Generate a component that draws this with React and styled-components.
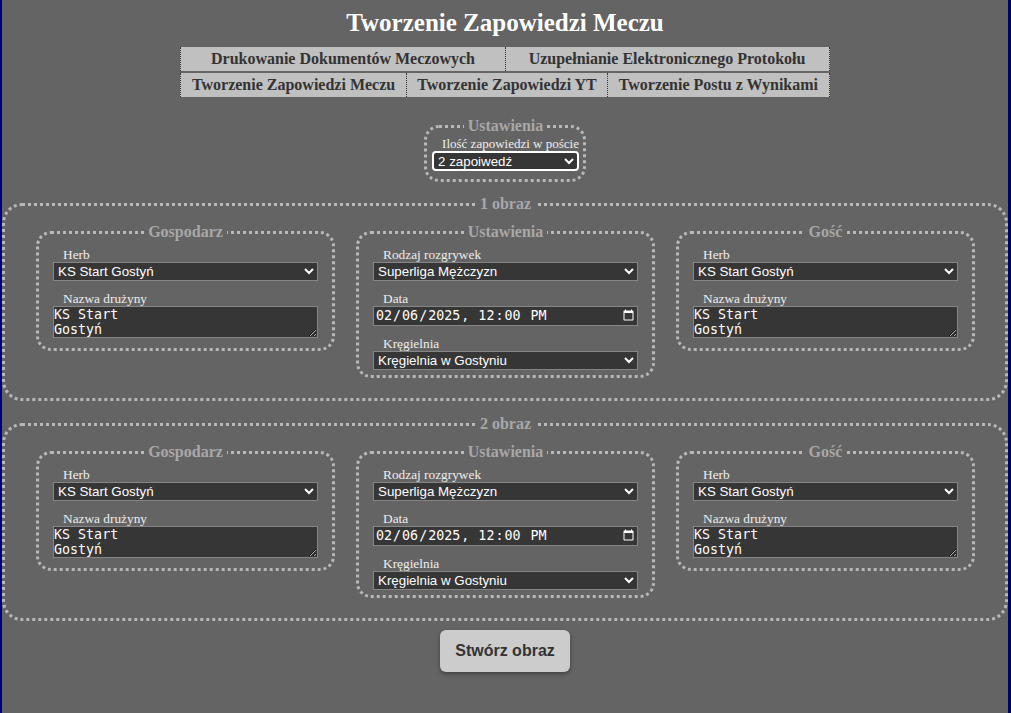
import React from "react";
import styled, { createGlobalStyle } from "styled-components";

const Global = createGlobalStyle`
  html, body { margin: 0; padding: 0; background: #00006e; }
  body { font-family: "Liberation Serif", "Times New Roman", serif; }
  #root { min-height: 100vh; }
`;

const Page = styled.div`
  margin: 0 3px 0 2px;
  min-height: 100vh;
  background: #646464;
  display: flex;
  flex-direction: column;
  align-items: center;
  color: #eee;
`;

const Title = styled.h1`
  margin: 8px 0 10px;
  font-size: 25px;
  line-height: 29px;
  font-weight: bold;
  color: #fff;
`;

const Tabs = styled.div`
  display: inline-flex;
  flex-direction: column;
  gap: 2px;
`;

const TabRow = styled.div`
  display: flex;
`;

const Tab = styled.button`
  flex: ${(p) => (p.$stretch ? 1 : "none")};
  background: #c0c0c0;
  color: #333;
  border: none;
  border-left: 1px dotted #333;
  &:last-child { border-right: 1px dotted #333; }
  padding: 3px 10.5px;
  margin: 0;
  font-family: "Liberation Serif", serif;
  font-weight: bold;
  font-size: 16px;
  line-height: 18px;
  cursor: pointer;
  white-space: nowrap;
`;

const Fieldset = styled.fieldset`
  box-sizing: border-box;
  border: 3px dotted #b8b8b8;
  border-radius: ${(p) => p.$radius || 15}px;
  margin: 0;
  min-width: 0;
`;

const Legend = styled.legend`
  margin: 0 auto;
  padding: 0 4px;
  font-family: "Liberation Serif", serif;
  font-weight: bold;
  font-size: 16px;
  line-height: 18px;
  color: #a8a8a8;
`;

const SettingsBox = styled(Fieldset)`
  margin-top: 20px;
  padding: 1px 4px 8px 5px;
  width: fit-content;
`;

const ImageBox = styled(Fieldset)`
  align-self: stretch;
  margin-top: ${(p) => p.$top}px;
  padding: 10px 30px 20px 31px;
  display: grid;
  grid-template-columns: repeat(3, 1fr);
  column-gap: 21px;
  align-items: start;
`;

const Panel = styled(Fieldset)`
  padding: 6px 14px 5px;
  display: flex;
  flex-direction: column;
`;

const Field = styled.div`
  display: flex;
  flex-direction: column;
  & + & { margin-top: ${(p) => p.$gap ?? 9}px; }
`;

const Label = styled.label`
  display: block;
  margin-left: 10px;
  font-family: "Liberation Serif", serif;
  font-size: ${(p) => p.$size || 13.33}px;
  line-height: 15px;
  color: #eee;
  white-space: nowrap;
`;

const Select = styled.select`
  color-scheme: dark;
  box-sizing: border-box;
  width: 100%;
  height: ${(p) => (p.$focus ? 20 : 19)}px;
  margin: 0;
  padding: 0;
  background-color: #363636;
  color: #fff;
  border: ${(p) => (p.$focus ? "2px solid #fff" : "1px solid #858585")};
  border-radius: ${(p) => (p.$focus ? 4 : 0)}px;
  font-family: "Liberation Sans", Arial, sans-serif;
  font-size: 13.33px;
`;

const TextArea = styled.textarea`
  color-scheme: dark;
  box-sizing: border-box;
  display: block;
  width: 100%;
  height: 32px;
  margin: 0 0 5px;
  padding: 0;
  background: #363636;
  color: #fff;
  border: 1px solid #858585;
  font-family: "DejaVu Sans Mono", monospace;
  font-size: 13.33px;
  line-height: 15px;
`;

const DateInput = styled.input`
  color-scheme: dark;
  box-sizing: border-box;
  width: 100%;
  height: 20px;
  margin: 0;
  padding: 0 0 0 1px;
  background: #363636;
  color: #fff;
  border: 1px solid #858585;
  font-family: "DejaVu Sans Mono", monospace;
  font-size: 13.33px;
`;

const CreateButton = styled.button`
  margin: 9px 0 30px;
  padding: 12px 15px;
  background: #cccccc;
  color: #333;
  border: none;
  border-radius: 6px;
  box-shadow: 0 2px 4px rgba(0, 0, 0, 0.35);
  font-family: "Liberation Sans", Arial, sans-serif;
  font-weight: bold;
  font-size: 16px;
  line-height: 18px;
  cursor: pointer;
`;

const teams = ["KS Start Gostyń", "KS Alfa Siedlce", "Zatoka Puck"];

function TeamPanel({ title, id }) {
  return (
    <Panel>
      <Legend>{title}</Legend>
      <Field>
        <Label htmlFor={id + "-herb"}>Herb</Label>
        <Select id={id + "-herb"} defaultValue={teams[0]}>
          {teams.map((t) => (
            <option key={t}>{t}</option>
          ))}
        </Select>
      </Field>
      <Field>
        <Label htmlFor={id + "-name"}>Nazwa drużyny</Label>
        <TextArea id={id + "-name"} defaultValue={"KS Start\nGostyń"} />
      </Field>
    </Panel>
  );
}

function SettingsPanel({ id }) {
  return (
    <Panel>
      <Legend>Ustawienia</Legend>
      <Field>
        <Label htmlFor={id + "-liga"}>Rodzaj rozgrywek</Label>
        <Select id={id + "-liga"} defaultValue="Superliga Mężczyzn">
          <option>Superliga Mężczyzn</option>
          <option>Superliga Kobiet</option>
          <option>I liga Mężczyzn</option>
        </Select>
      </Field>
      <Field>
        <Label htmlFor={id + "-data"}>Data</Label>
        <DateInput id={id + "-data"} type="datetime-local" defaultValue="2025-02-06T12:00" />
      </Field>
      <Field $gap={10}>
        <Label htmlFor={id + "-kreg"}>Kręgielnia</Label>
        <Select id={id + "-kreg"} defaultValue="Kręgielnia w Gostyniu">
          <option>Kręgielnia w Gostyniu</option>
          <option>Kręgielnia w Siedlcach</option>
        </Select>
      </Field>
    </Panel>
  );
}

function ImageSection({ n, top }) {
  return (
    <ImageBox $radius={20} $top={top}>
      <Legend>{n} obraz</Legend>
      <TeamPanel title="Gospodarz" id={`g${n}`} />
      <SettingsPanel id={`s${n}`} />
      <TeamPanel title="Gość" id={`a${n}`} />
    </ImageBox>
  );
}

export default function App() {
  return (
    <>
      <Global />
      <Page>
        <Title>Tworzenie Zapowiedzi Meczu</Title>
        <Tabs>
          <TabRow>
            <Tab $stretch>Drukowanie Dokumentów Meczowych</Tab>
            <Tab $stretch>Uzupełnianie Elektronicznego Protokołu</Tab>
          </TabRow>
          <TabRow>
            <Tab>Tworzenie Zapowiedzi Meczu</Tab>
            <Tab>Tworzenie Zapowiedzi YT</Tab>
            <Tab>Tworzenie Postu z Wynikami</Tab>
          </TabRow>
        </Tabs>
        <SettingsBox>
          <Legend>Ustawienia</Legend>
          <Label htmlFor="count" $size={13}>Ilość zapowiedzi w poście</Label>
          <Select id="count" $focus defaultValue="2">
            <option value="1">1 zapowiedź</option>
            <option value="2">2 zapoiwedź</option>
            <option value="3">3 zapowiedzi</option>
          </Select>
        </SettingsBox>
        <ImageSection n={1} top={13} />
        <ImageSection n={2} top={14} />
        <CreateButton>Stwórz obraz</CreateButton>
      </Page>
    </>
  );
}
